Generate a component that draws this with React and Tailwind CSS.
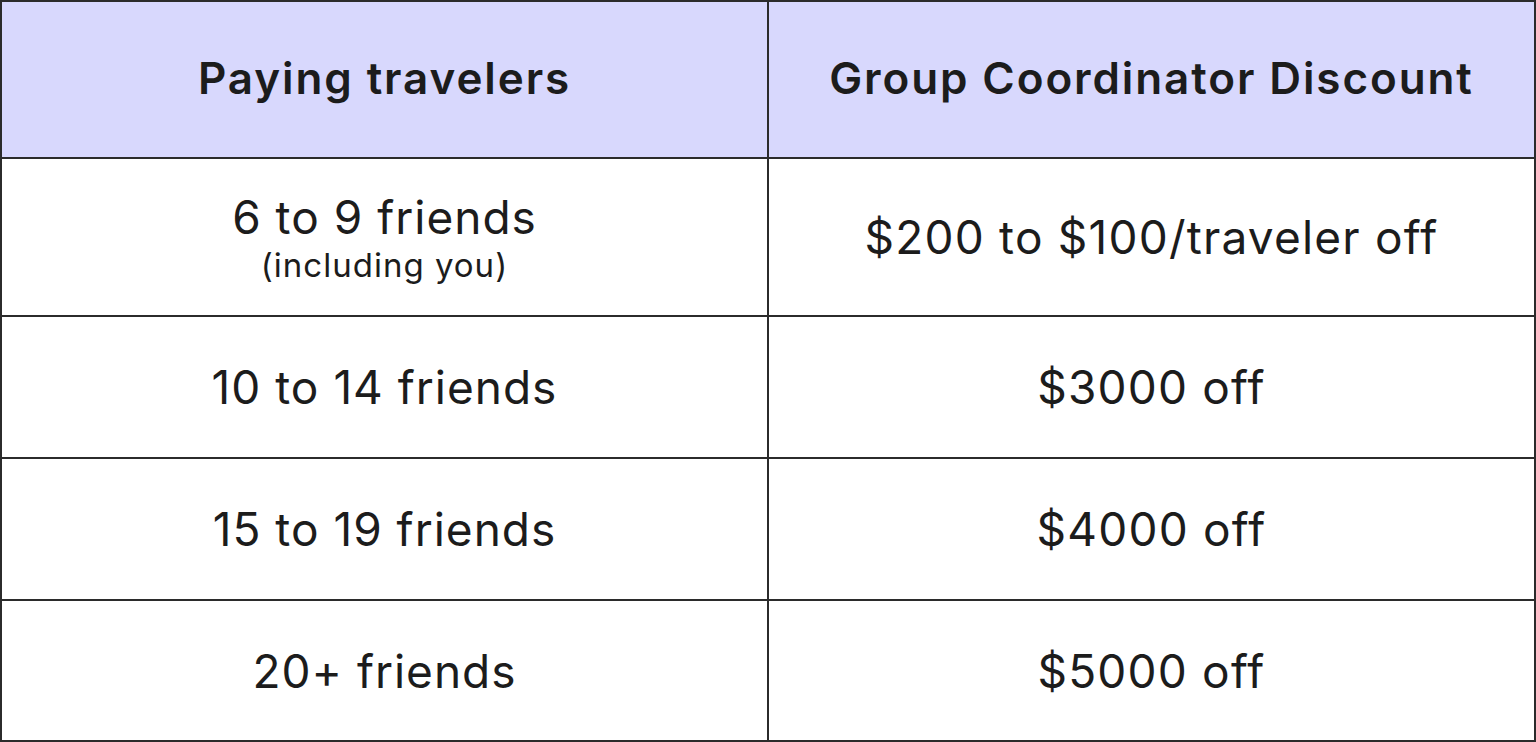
const rows = [
  { left: '6 to 9 friends', note: '(including you)', right: '$200 to $100/traveler off' },
  { left: '10 to 14 friends', right: '$3000 off' },
  { left: '15 to 19 friends', right: '$4000 off' },
  { left: '20+ friends', right: '$5000 off' },
];

const Cell = ({ children, className = '' }) => (
  <div className={`flex flex-col items-center justify-center text-[#1c1c1c] ${className}`}>
    {children}
  </div>
);

export default function App() {
  return (
    <div
      className="w-[1536px] h-[742px] bg-[#2b2b2b] p-[2px] grid grid-cols-2 grid-rows-[155px_156px_140px_140px_139px] gap-[2px]"
      style={{ fontFamily: 'Inter, "Noto Sans", sans-serif' }}
    >
      <Cell className="bg-[#d8d8fd] text-[44px] font-semibold tracking-[1.9px] pb-1">Paying travelers</Cell>
      <Cell className="bg-[#d8d8fd] text-[44px] font-semibold tracking-[1.9px] pb-1">Group Coordinator Discount</Cell>
      {rows.map((r) => (
        <>
          <Cell key={r.left} className="bg-white">
            <span className="text-[46px] leading-[50px] tracking-[1px]">{r.left}</span>
            {r.note && <span className="text-[33px] leading-[40px] tracking-[1px] mt-[3px] -mb-[3px]">{r.note}</span>}
          </Cell>
          <Cell key={r.right} className="bg-white">
            <span className="text-[46px] leading-[50px] tracking-[1.2px]">{r.right}</span>
          </Cell>
        </>
      ))}
    </div>
  );
}
